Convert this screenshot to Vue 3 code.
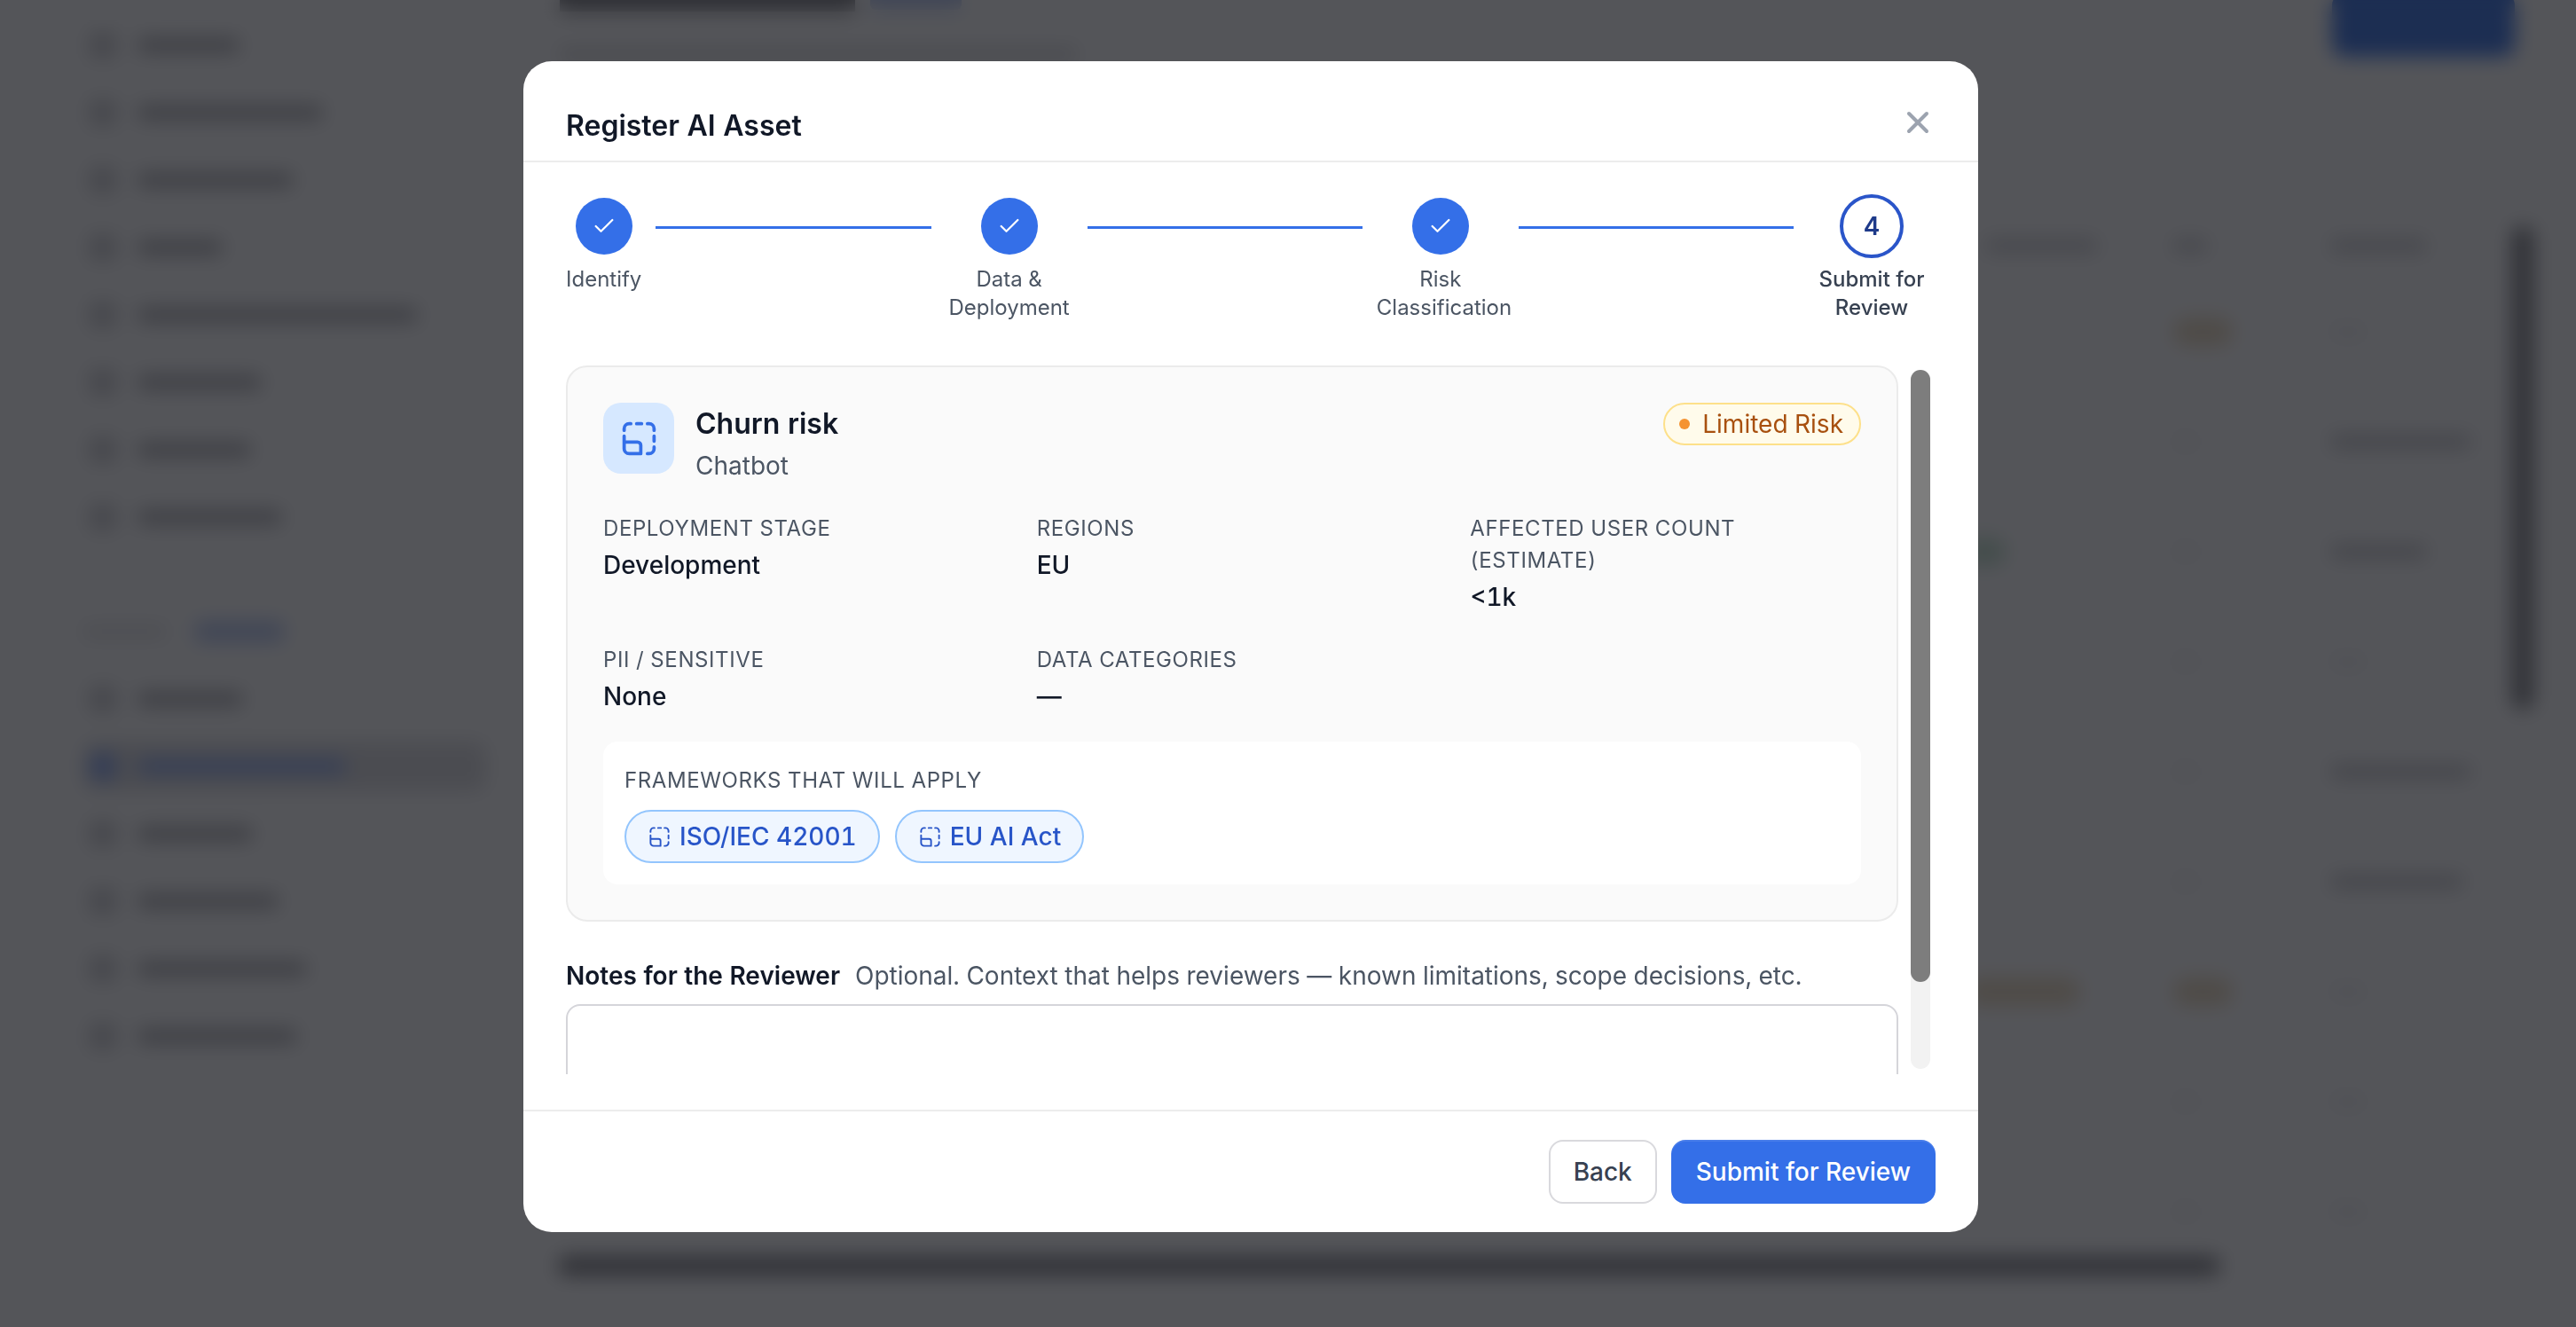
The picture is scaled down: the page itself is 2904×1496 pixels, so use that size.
<template>
  <div class="app">
    <!-- page behind the dialog, only ever seen blurred -->
    <div class="page">
      <aside class="sidebar">
        <div v-for="(w, i) in navTop" :key="'t' + i" class="nav-row">
          <span class="nav-icon"></span>
          <span class="nav-text" :style="{ width: w + 'px' }"></span>
        </div>
        <div class="nav-section">
          <span class="section-name"></span>
          <span class="section-tag"></span>
        </div>
        <div
          v-for="(item, i) in navBottom"
          :key="'b' + i"
          class="nav-row"
          :class="{ active: item.active }"
        >
          <span class="nav-icon"></span>
          <span class="nav-text" :style="{ width: item.w + 'px' }"></span>
        </div>
      </aside>

      <main class="main">
        <div class="main-head">
          <div>
            <div class="head-title">
              <span class="head-name"></span>
              <span class="head-tag"></span>
            </div>
            <div class="head-sub"></div>
          </div>
          <div class="head-btn"></div>
        </div>

        <div class="table-wrap">
          <div class="table">
            <div class="t-row t-head">
              <span></span>
              <span class="cell"><i style="width: 125px"></i></span>
              <span class="cell"><i style="width: 38px"></i></span>
              <span class="cell"><i style="width: 107px"></i></span>
            </div>
            <div v-for="(row, i) in rows" :key="i" class="t-row">
              <span></span>
              <span class="cell"><i :class="row.aKind" :style="{ width: row.a + 'px' }"></i></span>
              <span class="cell"><i :class="row.bKind" :style="{ width: row.b + 'px' }"></i></span>
              <span class="cell"><i :class="row.cKind" :style="{ width: row.c + 'px' }"></i></span>
            </div>
          </div>
          <div class="page-scroll"></div>
        </div>
        <div class="page-scroll-x"></div>
      </main>
    </div>

    <div class="overlay">
      <div class="modal">
        <header class="modal-header">
          <h2 class="modal-title">Register AI Asset</h2>
          <button class="close-btn" aria-label="Close">
            <svg viewBox="0 0 24 24" width="40" height="40" fill="none" stroke="currentColor" stroke-width="2.4" stroke-linecap="round" stroke-linejoin="round">
              <path d="M18 6 6 18" />
              <path d="m6 6 12 12" />
            </svg>
          </button>
        </header>

        <div class="stepper">
          <template v-for="(step, i) in steps" :key="step.label">
            <div class="step" :class="{ current: !step.done }">
              <div class="step-mark">
                <span v-if="step.done" class="step-circle">
                  <svg viewBox="0 0 24 24" width="28" height="28" fill="none" stroke="#fff" stroke-width="1.9" stroke-linecap="round" stroke-linejoin="round">
                    <path d="M20 6 9 17l-5-5" />
                  </svg>
                </span>
                <span v-else class="step-circle step-circle-now">{{ i + 1 }}</span>
              </div>
              <div class="step-label">{{ step.label }}</div>
            </div>
            <div v-if="i < steps.length - 1" class="step-line"></div>
          </template>
        </div>

        <div class="scroll-area">
          <div class="scroll-content">
            <section class="summary">
              <div class="summary-head">
                <div class="asset-icon">
                  <svg viewBox="0 0 24 24" width="45" height="45" fill="none" stroke="currentColor" stroke-width="2" stroke-linecap="round" stroke-linejoin="round">
                    <path :d="boxIcon" />
                  </svg>
                </div>
                <div class="asset-info">
                  <div class="asset-name">Churn risk</div>
                  <div class="asset-type">Chatbot</div>
                </div>
                <span class="risk-badge"><span class="risk-dot"></span>Limited Risk</span>
              </div>

              <div class="fields">
                <div v-for="f in fields" :key="f.label" class="field">
                  <div class="field-label">{{ f.label }}</div>
                  <div class="field-value">{{ f.value }}</div>
                </div>
              </div>

              <div class="frameworks">
                <div class="field-label">Frameworks that will apply</div>
                <div class="pills">
                  <span v-for="fw in frameworks" :key="fw" class="pill">
                    <svg viewBox="0 0 24 24" width="27" height="27" fill="none" stroke="currentColor" stroke-width="1.7" stroke-linecap="round" stroke-linejoin="round">
                      <path :d="boxIcon" />
                    </svg>
                    {{ fw }}
                  </span>
                </div>
              </div>
            </section>

            <div class="notes-head">
              <span class="notes-title">Notes for the Reviewer</span>
              <span class="notes-hint">Optional. Context that helps reviewers — known limitations, scope decisions, etc.</span>
            </div>
            <textarea class="notes-input"></textarea>
          </div>
          <div class="scrollbar"><div class="scrollbar-thumb"></div></div>
        </div>

        <footer class="modal-footer">
          <button class="btn btn-back">Back</button>
          <button class="btn btn-submit">Submit for Review</button>
        </footer>
      </div>
    </div>
  </div>
</template>

<script setup>
const steps = [
  { label: 'Identify', done: true },
  { label: 'Data & Deployment', done: true },
  { label: 'Risk Classification', done: true },
  { label: 'Submit for Review', done: false },
]

const fields = [
  { label: 'Deployment Stage', value: 'Development' },
  { label: 'Regions', value: 'EU' },
  { label: 'Affected User Count (Estimate)', value: '<1k' },
  { label: 'PII / Sensitive', value: 'None' },
  { label: 'Data Categories', value: '—' },
]

const frameworks = ['ISO/IEC 42001', 'EU AI Act']

// dashed box with a solid bottom-left corner
const boxIcon =
  'M3 7V6a3 3 0 0 1 3-3h1M10.5 3h3M17 3h1a3 3 0 0 1 3 3v1M21 10.5v3M21 17v1a3 3 0 0 1-3 3h-1M3 10.5V18a3 3 0 0 0 3 3h7v-5a2 2 0 0 0-2-2H3'

// background placeholders, widths in px
const navTop = [113, 207, 174, 94, 314, 138, 126, 161]
const navBottom = [
  { w: 117 },
  { w: 233, active: true },
  { w: 128 },
  { w: 157 },
  { w: 189 },
  { w: 178 },
]

const rows = [
  { a: 0, b: 67, bKind: 'warn', c: 38, cKind: 'faint' },
  { a: 0, b: 28, bKind: 'faint', c: 157 },
  { a: 47, aKind: 'ok', b: 28, bKind: 'faint', c: 107 },
  { a: 0, b: 28, bKind: 'faint', c: 38, cKind: 'faint' },
  { a: 0, b: 28, bKind: 'faint', c: 157 },
  { a: 0, b: 28, bKind: 'faint', c: 148 },
  { a: 128, aKind: 'warn shift', b: 67, bKind: 'warn', c: 38, cKind: 'faint' },
  { a: 0, b: 28, bKind: 'faint', c: 38, cKind: 'faint' },
  { a: 0, b: 28, bKind: 'faint', c: 38, cKind: 'faint' },
]
</script>

<style>
html,
body {
  margin: 0;
  overflow: hidden;
}
</style>

<style scoped>
.app {
  width: 2904px;
  height: 1496px;
  font-family: Inter, 'Noto Sans', sans-serif;
  font-variant-numeric: tabular-nums;
  overflow: hidden;
}

/* background page */
.page {
  display: flex;
  width: 2904px;
  height: 1496px;
  background: #fff;
}

.sidebar {
  width: 548px;
  flex-shrink: 0;
  padding: 13px 0 0 94px;
  box-sizing: border-box;
}

.nav-row {
  display: flex;
  align-items: center;
  gap: 25px;
  height: 76px;
  padding-left: 7px;
  border-radius: 14px;
}

.nav-row.active {
  height: 56px;
  margin: 10px 0;
  background: #e3e3e6;
}

.nav-icon {
  width: 30px;
  height: 30px;
  border-radius: 6px;
  background: #d6d6d9;
}

.nav-text {
  height: 16px;
  border-radius: 4px;
  background: #b8b8bc;
}

.nav-row.active .nav-icon,
.nav-row.active .nav-text {
  background: #a0b8f5;
}

.nav-section {
  display: flex;
  align-items: center;
  gap: 33px;
  height: 20px;
  margin: 81px 0 28px;
}

.section-name {
  width: 93px;
  height: 14px;
  background: #e6e6e8;
}

.section-tag {
  width: 100px;
  height: 24px;
  border-radius: 6px;
  background: #c4d2f5;
}

.main {
  flex: 1;
  display: flex;
  flex-direction: column;
  padding: 0 48px 0 83px;
  min-width: 0;
}

.main-head {
  display: flex;
  justify-content: space-between;
  height: 252px;
  margin-right: 21px;
}

.head-title {
  display: flex;
  align-items: center;
  gap: 17px;
  margin-top: -17px;
}

.head-name {
  width: 333px;
  height: 30px;
  background: #8f8f93;
}

.head-tag {
  width: 103px;
  height: 26px;
  background: #c4d2f5;
  border-radius: 6px;
}

.head-sub {
  width: 582px;
  height: 14px;
  margin-top: 41px;
  background: #dcdcde;
}

.head-btn {
  width: 206px;
  height: 72px;
  margin-top: -8px;
  border-radius: 14px;
  background: #5688e9;
}

.table-wrap {
  flex: 1;
  display: flex;
  min-height: 0;
}

.table {
  flex: 1;
  min-width: 0;
}

.t-row {
  display: grid;
  grid-template-columns: 1fr 211px 178px 221px;
  align-items: center;
  height: 124px;
}

.t-head {
  height: 50px;
  margin-bottom: 10px;
}

.cell i {
  display: block;
  height: 16px;
  background: #d0d0d3;
  border-radius: 4px;
}

.t-head .cell i {
  background: #d6d6d9;
}

.cell i.faint {
  background: #f2f2f3;
}

.cell i.warn {
  height: 32px;
  border-radius: 16px;
  background: #eee0c8;
}

.cell i.shift {
  margin-left: -22px;
}

.cell i.ok {
  height: 32px;
  margin-left: -25px;
  border-radius: 16px;
  background: #cce5d5;
}

.page-scroll {
  width: 24px;
  height: 545px;
  margin: 3px 0 0 -17px;
  border-radius: 12px;
  background: #929296;
}

.page-scroll-x {
  width: 1874px;
  height: 22px;
  margin: 0 0 58px -2px;
  border-radius: 11px;
  background: #929296;
}

/* dialog */
.overlay {
  position: fixed;
  inset: 0;
  display: flex;
  align-items: center;
  justify-content: center;
  padding: 0 84px 38px 0;
  background: rgba(0, 2, 8, 0.67);
  backdrop-filter: blur(11px);
}

.modal {
  display: flex;
  flex-direction: column;
  width: 1640px;
  height: 1320px;
  background: #fff;
  border-radius: 32px;
  overflow: hidden;
}

.modal-header {
  display: flex;
  align-items: center;
  justify-content: space-between;
  padding: 32px 48px 0;
  box-sizing: border-box;
  height: 114px;
  border-bottom: 2px solid #ececec;
}

.modal-title {
  margin: 0;
  font-size: 32px;
  font-weight: 600;
  color: #111827;
}

.close-btn {
  display: flex;
  width: 40px;
  height: 40px;
  margin-top: -6px;
  padding: 0;
  border: none;
  background: none;
  color: #9ca3af;
}

.stepper {
  display: flex;
  align-items: flex-start;
  padding: 36px 48px 0;
}

.step {
  flex-shrink: 0;
  max-width: 144px;
  display: flex;
  flex-direction: column;
  align-items: center;
}

.step-mark {
  display: flex;
  align-items: center;
  justify-content: center;
  height: 72px;
}

.step-circle {
  display: flex;
  align-items: center;
  justify-content: center;
  width: 64px;
  height: 64px;
  border-radius: 50%;
  background: #346fe8;
}

.step-circle-now {
  width: 72px;
  height: 72px;
  box-sizing: border-box;
  border: 4px solid #2a55c9;
  background: #fff;
  color: #1e3a8a;
  font-size: 28px;
  font-weight: 600;
}

.step-label {
  margin-top: 8px;
  width: 100%;
  font-size: 24px;
  line-height: 32px;
  color: #4b5563;
  text-align: center;
}

.current .step-label {
  color: #374151;
  font-weight: 500;
}

.step-line {
  flex: 1;
  height: 3px;
  margin: 36px 16px 0;
  background: #346fe8;
}

.scroll-area {
  flex: 1;
  display: flex;
  gap: 14px;
  min-height: 0;
  margin: 49px 0 40px;
  padding: 0 54px 0 48px;
  overflow: hidden;
}

.scroll-content {
  flex: 1;
  min-width: 0;
}

.scrollbar {
  flex-shrink: 0;
  width: 22px;
  margin: 5px 0 6px;
  border-radius: 11px;
  background: #f2f2f2;
}

.scrollbar-thumb {
  height: 690px;
  border-radius: 11px;
  background: #7d7d7d;
}

.summary {
  padding: 40px;
  border: 2px solid #ebebeb;
  border-radius: 24px;
  background: #fafafa;
}

.summary-head {
  display: flex;
  align-items: flex-start;
  gap: 24px;
}

.asset-icon {
  display: flex;
  align-items: center;
  justify-content: center;
  flex-shrink: 0;
  width: 80px;
  height: 80px;
  border-radius: 20px;
  background: #d6e8ff;
  color: #346fe8;
}

.asset-info {
  flex: 1;
}

.asset-name {
  font-size: 32px;
  line-height: 48px;
  font-weight: 600;
  color: #111827;
}

.asset-type {
  margin-top: 3px;
  font-size: 28px;
  line-height: 40px;
  color: #4b5563;
}

.risk-badge {
  display: flex;
  align-items: center;
  gap: 14px;
  height: 48px;
  padding: 0 18px 0 16px;
  border: 2px solid #fde08a;
  border-radius: 24px;
  background: #fffbeb;
  color: #a8500f;
  font-size: 28px;
  box-sizing: border-box;
}

.risk-dot {
  width: 12px;
  height: 12px;
  border-radius: 50%;
  background: #f59331;
}

.fields {
  display: grid;
  grid-template-columns: repeat(3, 1fr);
  gap: 30px 48px;
  margin-top: 31px;
}

.field {
  padding-top: 2px;
}

.field-label {
  font-size: 24px;
  line-height: 36px;
  letter-spacing: 0.025em;
  text-transform: uppercase;
  color: #4b5563;
}

.field-value {
  margin-top: 2px;
  font-size: 28px;
  line-height: 42px;
  font-weight: 500;
  color: #111827;
}

.frameworks {
  margin-top: 30px;
  padding: 26px 24px 24px;
  border-radius: 16px;
  background: #fff;
}

.pills {
  display: flex;
  gap: 17px;
  margin-top: 15px;
}

.pill {
  display: flex;
  align-items: center;
  gap: 9px;
  height: 60px;
  padding: 0 24px 0 24px;
  border: 2px solid #93c5fd;
  border-radius: 30px;
  background: #eff6ff;
  color: #2855c8;
  font-size: 28px;
  font-weight: 500;
  box-sizing: border-box;
}

.notes-head {
  display: flex;
  align-items: baseline;
  gap: 17px;
  margin-top: 40px;
  line-height: 42px;
  font-size: 28px;
}

.notes-title {
  font-weight: 600;
  color: #111827;
}

.notes-hint {
  color: #4b5563;
}

.notes-input {
  display: block;
  width: 100%;
  height: 200px;
  margin-top: 11px;
  box-sizing: border-box;
  border: 2px solid #d5d5da;
  border-radius: 16px;
  background: #fff;
  resize: none;
  outline: none;
}

.modal-footer {
  display: flex;
  justify-content: flex-end;
  gap: 16px;
  padding: 32px 48px 32px 0;
  border-top: 2px solid #ececec;
}

.btn {
  height: 72px;
  padding: 0 28px;
  border-radius: 16px;
  font-family: inherit;
  font-size: 28px;
  font-weight: 500;
}

.btn-back {
  padding: 0 26px;
  border: 2px solid #d9d9dd;
  background: #fff;
  color: #374151;
}

.btn-submit {
  border: none;
  background: #346fe8;
  color: #fff;
  box-shadow: inset 0 2px 0 rgba(255, 255, 255, 0.1);
}
</style>
